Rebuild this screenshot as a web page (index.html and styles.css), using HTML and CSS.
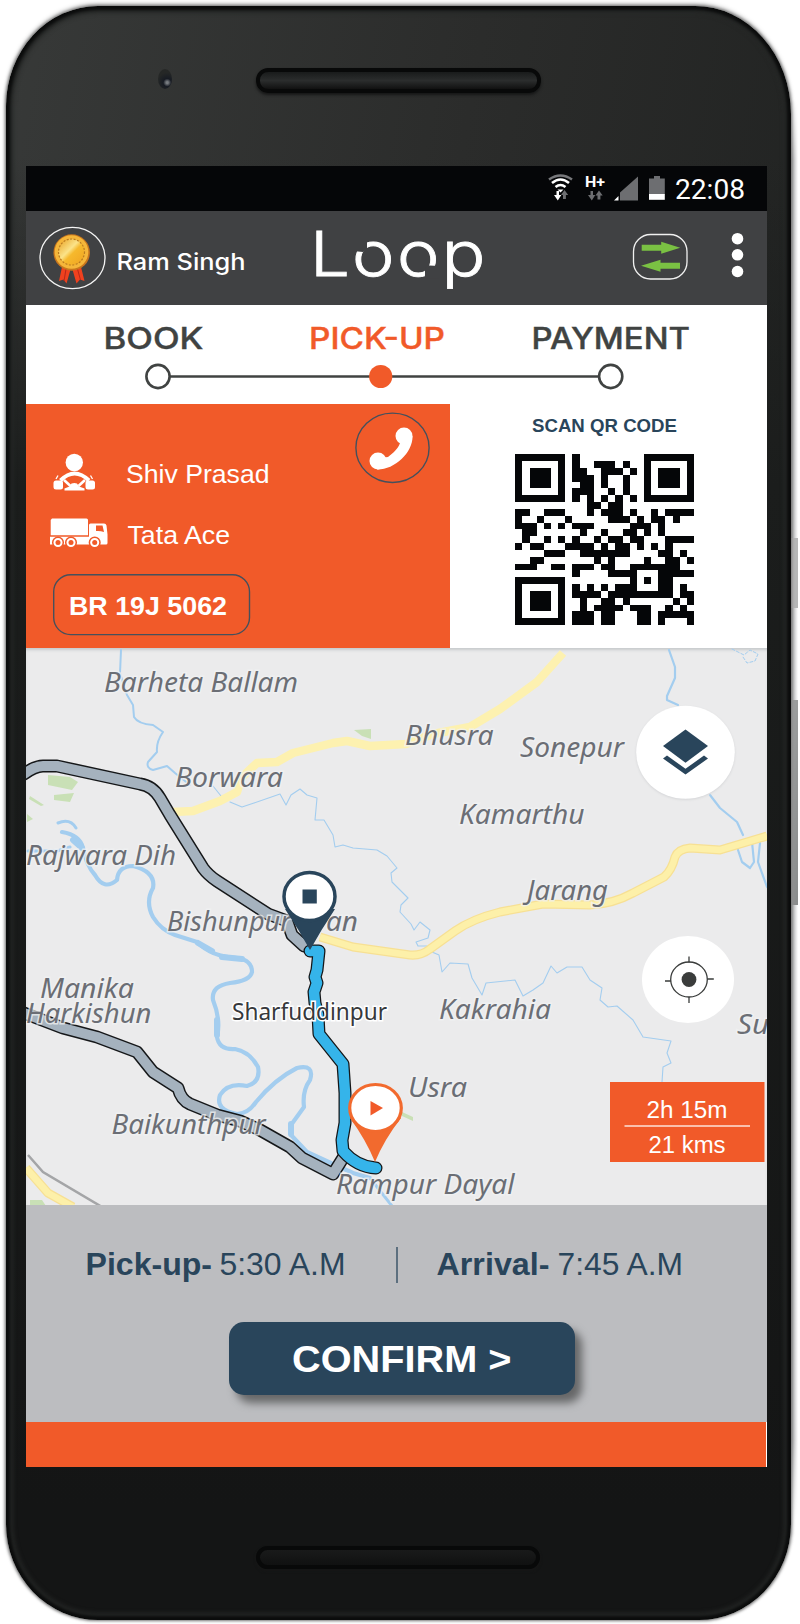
FILE: index.html
```html
<!DOCTYPE html>
<html lang="en">
<head>
<meta charset="utf-8">
<title>Loop</title>
<link rel="stylesheet" href="styles.css">
</head>
<body>
<div class="phone">
  <div class="bezel-top"><span class="camera"></span><span class="speaker"></span></div>
  <main class="screen">
    <div class="status">
      <svg viewBox="26 166 741 45">
        <g fill="none" stroke-width="2.6">
          <path d="M549 179.500Q560.500 171.500 572 179.500" stroke="#77787b"/>
          <path d="M552 183Q560.500 176 569 183M555.500 187Q560.500 183 565.500 187" stroke="#fff"/>
        </g>
        <path d="M557.500 189.500h6l-3 3z" fill="#fff"/>
        <path d="M556.500 191v4h-2.500l3.800 5.500 3.500-5.500h-2.300v-4z" fill="#fff"/>
        <path d="M563 199v-4h-2l3.500-5 3.700 5h-2.300v4zM590.500 191v4h-2.500l3.800 5.500 3.500-5.500h-2.300v-4zM597.500 199.500v-4h-2l3.500-5 3.700 5h-2.300v4z" fill="#6d6e71"/>
        <text class="hplus" x="585" y="187" textLength="20" lengthAdjust="spacingAndGlyphs">H+</text>
        <path d="M638 176.500V200.500H620V192.500z" fill="#6d6e71"/><path d="M614 200.500l4.500-4.500v4.500z" fill="#fff"/>
        <path d="M649 178.500h5v-2.500h6v2.500h4.800v16H649z" fill="#6d6e71"/><path d="M649 194h15.800v5.800H649z" fill="#fff"/>
        <text class="clock" x="675" y="198.500" textLength="70" lengthAdjust="spacingAndGlyphs">22:08</text>
      </svg>
    </div>

    <header class="bar">
      <svg viewBox="26 211 741 94">
        <defs>
          <linearGradient id="gold" x1="0" y1="0" x2="1" y2="1"><stop offset="0" stop-color="#e9a01f"/><stop offset=".42" stop-color="#fbe389"/><stop offset=".55" stop-color="#f6b92d"/><stop offset="1" stop-color="#f0a321"/></linearGradient>
        </defs>
        <ellipse cx="72.500" cy="258" rx="32.500" ry="30.700" fill="none" stroke="#f4f4f4" stroke-width="1.300"/>
        <path d="M62 267l-3 14 4.500-1.500 3 4 4-14v-2.500zM81 267l3.500 14-4.500-1.500-3.500 4-4-14v-2.500z" fill="#f0411e"/>
        <path d="M66 269l-2 12M77.500 269l3 11" stroke="#b7281a" stroke-width="1"/>
        <circle cx="71.700" cy="252.500" r="18.200" fill="#c9761d"/>
        <circle cx="71.500" cy="252" r="16.800" fill="#f5b63a"/>
        <circle cx="71.500" cy="252" r="13" fill="url(#gold)" stroke="#b97a20" stroke-width="1.200" stroke-dasharray="2 1.500"/>
        <text class="user" x="116.500" y="269.500" textLength="129" lengthAdjust="spacingAndGlyphs">Ram Singh</text>
        <g class="logo">
          <text x="310" y="276" textLength="40" lengthAdjust="spacingAndGlyphs">L</text>
          <text x="352" y="276" textLength="42.500" lengthAdjust="spacingAndGlyphs">o</text>
          <text x="397" y="276" textLength="42.500" lengthAdjust="spacingAndGlyphs">o</text>
          <text x="441.500" y="276" textLength="44" lengthAdjust="spacingAndGlyphs">p</text>
        </g>
        <path d="M353 251l10 1 4-3v-10h-14zM439 266l-10-.5-4 3v10h14z" fill="#404143"/>
        <rect x="633.500" y="234.500" width="53.500" height="44.500" rx="17" fill="none" stroke="#f0f0f0" stroke-width="1.300"/>
        <path d="M641.700 244.700h19.500v-3l19 6-19 6v-3h-19.500zM680 268.700h-19.500v3l-19.500-6 19.500-6v3H680z" fill="#7ac143"/>
        <g fill="#fff"><circle cx="737.500" cy="238.700" r="5.800"/><circle cx="737.500" cy="254.800" r="5.800"/><circle cx="737.500" cy="271.500" r="5.800"/></g>
      </svg>
    </header>

    <nav class="steps">
      <svg viewBox="26 305 741 99">
        <text x="103.500" y="349" textLength="100" lengthAdjust="spacingAndGlyphs">BOOK</text>
        <text class="on" x="309" y="349" textLength="136" lengthAdjust="spacingAndGlyphs">PICK-UP</text>
        <text x="531.500" y="349" textLength="158.500" lengthAdjust="spacingAndGlyphs">PAYMENT</text>
        <g fill="#fff" stroke="#404342" stroke-width="2.600">
          <path d="M158 376.500H611"/><circle cx="158" cy="376.500" r="11.600"/><circle cx="610.700" cy="376.500" r="11.600"/>
        </g>
        <circle cx="380.700" cy="376.500" r="11.600" fill="#f15a29"/>
      </svg>
    </nav>

    <section class="trip">
      <div class="driver">
        <svg viewBox="26 404 424 244">
          <ellipse cx="392.500" cy="447.800" rx="36.600" ry="34.700" fill="none" stroke="#45505c" stroke-width="1.400"/>
          <g fill="#fff">
            <circle cx="404" cy="436" r="8.500"/><circle cx="378" cy="461" r="8.500"/>
            <path d="M412.500 436C413 453 394 470 377 469.500L384 457.500 388 457C393 453 398 449 400 443z"/>
            <circle cx="74.300" cy="462.500" r="8.700"/>
            <rect x="53.500" y="480.500" width="9.500" height="9" rx="2.500"/><rect x="85.500" y="480.500" width="9.500" height="9" rx="2.500"/>
            <path d="M64.500 488.500l5-2 2-3q3-1 5.500 0l2 3 5.500 2v2h-20z"/>
          </g>
          <path d="M60.500 480.500Q74.500 466.500 89 480.500" fill="none" stroke="#fff" stroke-width="4"/>
          <path d="M64 480l6.500 6M85 480l-6.500 6" stroke="#fff" stroke-width="2.600"/>
          <path d="M56 479l2-3.500M92.500 479l-2-3.500" stroke="#fff" stroke-width="1.300"/>
          <g fill="#fff">
            <path d="M52 518.500h34.500q1.500 0 1.500 1.500v15.300H50.700V520z"/>
            <path d="M50 536.800h39V525q0-1.500 1.500-1.500H104q2 0 2.500 2l1 9v8.500q0 1.500-1.500 1.500H50z"/>
          </g>
          <path d="M96 525.500h6.500l1.500 6.500q-4-1.500-8-1z" fill="#f15a29"/>
          <g fill="#fff" stroke="#f15a29" stroke-width="1.500"><circle cx="58" cy="542.500" r="5.300"/><circle cx="71" cy="542.500" r="5.300"/><circle cx="94.700" cy="542.500" r="5.300"/></g>
          <g fill="#f15a29"><circle cx="58" cy="542.500" r="2.500"/><circle cx="71" cy="542.500" r="2.500"/><circle cx="94.700" cy="542.500" r="2.500"/></g>
          <text x="126" y="482.500" textLength="143.500" lengthAdjust="spacingAndGlyphs">Shiv Prasad</text>
          <text x="127.500" y="544" textLength="102.500" lengthAdjust="spacingAndGlyphs">Tata Ace</text>
          <rect x="53.700" y="574.800" width="195.800" height="59.800" rx="17" fill="none" stroke="#45505c" stroke-width="1.400"/>
          <text class="plate" x="69" y="614.700" textLength="158" lengthAdjust="spacingAndGlyphs">BR 19J 5062</text>
        </svg>
      </div>
      <div class="scan">
        <svg viewBox="450 404 317 244">
          <text x="532" y="431.500" textLength="145" lengthAdjust="spacingAndGlyphs">SCAN QR CODE</text>
          <path id="qr" transform="translate(515.300 454.300) scale(7.150 6.830)" fill="#050608" shape-rendering="crispEdges"/>
        </svg>
      </div>
    </section>

    <section class="map">
      <svg viewBox="26 648 741 557">
        <g fill="#c9e0b6">
          <path d="M48 775l22 2 8 5-6 8-24-5zM54 795l20-2-4 9-16-2zM30 796l14 9-3 1-12-7zM27 814l6 5-6 3zM354 730l17-1v10l-9-3zM30 1200l12 0 4 6H30zM402 1112l11 5v4l-11-5z"/>
        </g>
        <g fill="none" stroke="#a3cdef" stroke-linejoin="round" stroke-linecap="round">
          <path stroke-width="2" d="M121 650L120 673 127 695 133 705 134 717Q138 724 153 725L163 732Q156 742 157 752L148 762Q146 768 153 770L167 766 175 773 190 785"/>
          <path stroke-width="1.100" d="M213 786L221 796M230 802L242 807 254 803 280 794 286 805 291 795 300 789 307 795 317 798 315 820 324 820 333 835 335 847 343 845 353 848 377 850 387 856 397 868 391 873 392 882 408 898 401 905 400 912 411 924 414 930 420 922 430 930 428 938 416 942 418 946 427 946 432 952 439 955 442 972 450 963 468 964 472 978 482 995 486 983 515 980 523 996 533 990 543 983 551 966 557 973 567 967 582 967 590 980 602 988 600 1000 608 1007 617 1006 633 1020 643 1037 671 1041 667 1053 671 1063 663 1067 662 1082"/>
          <path stroke-width="4.200" d="M62 832Q80 835 83 848 86 865 95 875 104 891 117 880 118 866 133 866 156 872 153 888 145 902 153 917 161 930 175 935L197 942Q212 957 237 958 252 960 252 972 250 981 230 983 211 986 213 1000 221 1020 217 1037 219 1050 235 1049 250 1052 258 1067 261 1082 247 1086 228 1082 220 1095 215 1110 237 1114 248 1114 256 1102 275 1079 297 1068 315 1064 310 1080 302 1091 304 1107L291 1125V1135L307 1152 333 1164 353 1173 370 1178"/>
          <path stroke-width="6" d="M198 943l14 8M222 957l20 2M217 1020v15M73 840l9 8M291 1124v10"/>
          <path stroke-width="3" d="M58 823Q70 818 76 828M70 847l-13 4H28M370 1178L392 1206"/>
          <path stroke-width="2.200" d="M669 650L675 667V678L667 696V700L678 705M710 795L720 808 737 822 743 835M738 850L742 862 750 868 754 862 752 842M760 843L758 862 767 887"/>
          <path stroke-width="1" stroke-dasharray="3 2" d="M732 649l12 6 6-5 8 4-3 7-8 2-4-6"/>
        </g>
        <path d="M28 1155L43 1172 102 1207" fill="none" stroke="#a4a5a7" stroke-width="2.500"/>
        <path fill="none" stroke="#f7e094" stroke-width="9" stroke-linejoin="round" d="M320 937L353 947 410 955Q421 956 430 949L455 931Q472 919 500 912L543 904 590 905Q613 904 633 893L664 877Q672 870 675 857 678 849 690 848L720 850 767 836M26 1168L48 1193 73 1207"/>
        <g fill="none" stroke="#fdf0a9" stroke-linejoin="round">
          <path stroke-width="6.500" d="M320 937L353 947 410 955Q421 956 430 949L455 931Q472 919 500 912L543 904 590 905Q613 904 633 893L664 877Q672 870 675 857 678 849 690 848L720 850 767 836M26 1168L48 1193 73 1207"/>
          <path stroke-width="8.500" stroke="#fdf1b0" d="M173 812L193 811 220 801 237 792 241 778 257 763 277 762 293 753 333 743 347 741 370 746 406 744 433 734 470 727 500 709 537 682 563 653"/>
        </g>
        <g fill="none" stroke-linejoin="round" stroke-linecap="round">
          <path class="route-edge" d="M24 774Q35 766 43 766H57L140 784Q153 786 160 798L170 815 203 868Q208 875 217 881L268 914 287 921 292 935 304 946"/>
          <path class="route-edge" d="M24 1013L63 1028 97 1037 137 1052 153 1072 178 1088Q181 1100 190 1104L217 1115 240 1121 260 1130 290 1147 302 1158 333 1174 343 1158"/>
          <path class="route" d="M24 774Q35 766 43 766H57L140 784Q153 786 160 798L170 815 203 868Q208 875 217 881L268 914 287 921 292 935 304 946"/>
          <path class="route" d="M24 1013L63 1028 97 1037 137 1052 153 1072 178 1088Q181 1100 190 1104L217 1115 240 1121 260 1130 290 1147 302 1158 333 1174 343 1158"/>
          <path class="route-edge" d="M310 951L319 951 317 970 315 977 317 983 314 992 315 1003 318 1015 319 1034 343 1064 345 1093 345 1123 342 1140 343 1151Q357 1167 376 1168"/>
          <path class="active" d="M310 951L319 951 317 970 315 977 317 983 314 992 315 1003 318 1015 319 1034 343 1064 345 1093 345 1123 342 1140 343 1151Q357 1167 376 1168"/>
        </g>
        <g class="places">
          <text x="104" y="692" textLength="194" lengthAdjust="spacingAndGlyphs">Barheta Ballam</text>
          <text x="405" y="745" textLength="88.500" lengthAdjust="spacingAndGlyphs">Bhusra</text>
          <text x="520" y="756.500" textLength="104" lengthAdjust="spacingAndGlyphs">Sonepur</text>
          <text x="175" y="786.500" textLength="108" lengthAdjust="spacingAndGlyphs">Borwara</text>
          <text x="459" y="823.500" textLength="125.500" lengthAdjust="spacingAndGlyphs">Kamarthu</text>
          <text x="26" y="865" textLength="150" lengthAdjust="spacingAndGlyphs">Rajwara Dih</text>
          <text x="527" y="900" textLength="81" lengthAdjust="spacingAndGlyphs">Jarang</text>
          <text x="167" y="930.500" textLength="124" lengthAdjust="spacingAndGlyphs">Bishunpur</text>
          <text x="326" y="930.500" textLength="32" lengthAdjust="spacingAndGlyphs">an</text>
          <text x="40" y="997.500" textLength="94" lengthAdjust="spacingAndGlyphs">Manika</text>
          <text x="26" y="1022.500" textLength="125.500" lengthAdjust="spacingAndGlyphs">Harkishun</text>
          <text x="439" y="1018.500" textLength="112" lengthAdjust="spacingAndGlyphs">Kakrahia</text>
          <text x="408" y="1096.500" textLength="59" lengthAdjust="spacingAndGlyphs">Usra</text>
          <text x="111.500" y="1133.500" textLength="154" lengthAdjust="spacingAndGlyphs">Baikunthpur</text>
          <text x="336" y="1194" textLength="178.500" lengthAdjust="spacingAndGlyphs">Rampur Dayal</text>
          <text x="737" y="1033.500" textLength="32" lengthAdjust="spacingAndGlyphs">Su</text>
          <text class="town" x="232" y="1019.500" textLength="155" lengthAdjust="spacingAndGlyphs">Sharfuddinpur</text>
        </g>
        <path d="M285 909Q299 930 310 950 321 930 335 909z" fill="#29455b"/>
        <ellipse cx="309.500" cy="896.500" rx="25.500" ry="24" fill="#fff" stroke="#29455b" stroke-width="3.500"/>
        <path d="M302.500 889.500h14.300v14h-14.300z" fill="#29455b"/>
        <path d="M350 1118Q366 1140 375 1162 384 1140 401 1118z" fill="#f26a2e"/>
        <ellipse cx="375.500" cy="1108" rx="25.800" ry="23.500" fill="#fff" stroke="#f26a2e" stroke-width="3.200"/>
        <path d="M370.500 1101l12.500 7-12.500 7.500z" fill="#f15a29"/>
        <g fill="#fff">
          <ellipse class="lift" cx="685.500" cy="752.300" rx="49.300" ry="46.500"/>
          <ellipse cx="688" cy="979.500" rx="46" ry="43.500"/>
        </g>
        <g fill="#29455b"><path d="M685.500 729.500l22.500 16.500-22.500 16.700L663 746z"/><path d="M663 758.500l4-3 18.500 13.300 18.500-13.300 4 3-22.500 16z"/></g>
        <g fill="none" stroke="#3a3c3b" stroke-width="1.300"><ellipse cx="689" cy="979.500" rx="18.300" ry="17.500"/><path d="M689 956.500v6M689 997v6M665 981h6M707.300 979h6.500"/></g>
        <circle cx="689" cy="979.500" r="7.400" fill="#3a3c3b"/>
        <g class="eta">
          <path d="M610 1082h154.500v80H610z" fill="#f15a29"/>
          <path d="M624.500 1126h125.500" stroke="#fde3d9" stroke-width="1.400"/>
          <text x="646.500" y="1118" textLength="81" lengthAdjust="spacingAndGlyphs">2h 15m</text>
          <text x="648.500" y="1152.500" textLength="77" lengthAdjust="spacingAndGlyphs">21 kms</text>
        </g>
      </svg>
    </section>

    <section class="summary">
      <svg class="times" viewBox="26 1240 741 50">
        <text class="b" x="85.500" y="1274.500" textLength="126.500" lengthAdjust="spacingAndGlyphs">Pick-up-</text>
        <text x="219.500" y="1274.500" textLength="126" lengthAdjust="spacingAndGlyphs">5:30 A.M</text>
        <path d="M397 1247v36" stroke="#29455b" stroke-width="1.300"/>
        <text class="b" x="436.500" y="1274.500" textLength="113" lengthAdjust="spacingAndGlyphs">Arrival-</text>
        <text x="557.500" y="1274.500" textLength="125.500" lengthAdjust="spacingAndGlyphs">7:45 A.M</text>
      </svg>
      <button class="confirm">
        <svg viewBox="229 1322 346 73">
          <text x="292" y="1371.500" textLength="219.500" lengthAdjust="spacingAndGlyphs">CONFIRM &gt;</text>
        </svg>
      </button>
    </section>
    <footer class="strip"></footer>
  </main>
  <div class="bezel-bottom"><span class="speaker low"></span></div>
</div>
<script src="qr.js"></script>
</body>
</html>
```

FILE: styles.css
```css
* { box-sizing: border-box; }
body { margin: 0; width: 800px; height: 1624px; overflow: hidden; padding: 6px 0 0 6px; background: #fff;
  font-family: "Liberation Sans", Arial, sans-serif; }
/* side keys along the right edge */
body::before { content: ""; position: absolute; z-index: -1; left: 785px; top: 100px; width: 15px; height: 1420px;
  background: linear-gradient(#9a9c9c, #8a8c8c) 0 600px / 13px 205px no-repeat,
    linear-gradient(#b5b6b6, #b5b6b6) 0 438px / 13px 70px no-repeat,
    linear-gradient(90deg, #6d6f70 5px, #c9cacb 9px, #fff 13px);
  -webkit-mask: linear-gradient(transparent, #000 60px, #000 1340px, transparent);
  mask: linear-gradient(transparent, #000 60px, #000 1340px, transparent); }
svg { display: block; width: 100%; height: 100%; }

.phone { width: 785px; height: 1614px; padding: 0 20px; display: flex; flex-direction: column;
  border-radius: 92px 96px 92px 92px / 100px 108px 96px 96px;
  background: linear-gradient(transparent 150px, #1b1d1c 480px, #141515 1500px), linear-gradient(100deg, #373938 0, #2b2c2b 45%, #1d1f1e 100%);
  box-shadow: inset 0 0 3px 4px #0b0c0c, inset 0 0 4px 7px #262827, 0 0 3px 1px #777, 0 -2px 5px #bbb; }
.bezel-top { height: 160px; padding: 62px 0 0 132px; display: flex; gap: 84px; }
.camera { width: 14px; height: 20px; margin-top: 1px; border-radius: 50%;
  background: radial-gradient(circle at 66% 68%, #777b80 0 1px, #171b23 4px, #252726 10px); }
.speaker { width: 285px; height: 25px; border: 4px solid #080909; border-radius: 12px;
  background: linear-gradient(#191b1b, #2b2d2d 50%, #111); box-shadow: 0 2px 3px #161717; }
.bezel-bottom { height: 153px; padding: 79px 0 0 230px; }
.low { display: block; width: 284px; height: 23px; background: linear-gradient(#191a1a, #101111); }

.screen { width: 741px; height: 1301px; flex: none; background: #fff; }
.status { height: 45px; background: #050608; }
.hplus { font: 700 15px Roboto, sans-serif; fill: #fff; }
.clock { font: 400 27px Roboto, sans-serif; fill: #fff; }
.bar { height: 94px; background: #404143; }
.user { font: 500 22.500px Inter, sans-serif; fill: #fff; }
.logo { font: 300 62px Inter, sans-serif; fill: #fff; stroke: #fff; stroke-width: .8px; }
.steps { height: 99px; }
.steps text { font: 500 29.500px Inter, sans-serif; fill: #404342; stroke: #404342; stroke-width: .4px; }
.steps .on { fill: #f15a29; stroke: #f15a29; }

.trip { height: 244px; display: flex; }
.driver { width: 424px; background: #f15a29; }
.driver text { font-size: 25.500px; fill: #fff; }
.driver .plate { font-weight: 700; font-size: 26px; }
.scan { flex: 1; }
.scan text { font-weight: 700; font-size: 18px; fill: #29455b; }

.map { height: 557px; background: #ebebec; box-shadow: inset 0 3px 3px -1px #c6c9cb; }
.route-edge { stroke: #151719; stroke-width: 13px; }
.route { stroke: #a5b2be; stroke-width: 10px; }
.active { stroke: #35b4ea; stroke-width: 10.500px; }
.places text { font: italic 400 26.500px "Noto Sans", "Open Sans", sans-serif; fill: #6b6e75; stroke: #f1f2f3;
  stroke-width: 3px; stroke-opacity: .75; paint-order: stroke; }
.places .town { font-style: normal; font-size: 23px; fill: #36383b; stroke: #fff; stroke-opacity: 1; }
.lift { filter: drop-shadow(0 1px 1px #d4d5d7); }
.eta text { font-size: 23.500px; fill: #fff; }

.summary { height: 217px; padding-top: 35px; background: #bcbdc0; }
.times { height: 50px; font-size: 30.500px; fill: #29455b; }
.times .b { font-weight: 700; }
.confirm { display: block; width: 346px; height: 73px; margin: 32px 0 0 203px; padding: 0; border: 0; border-radius: 15px;
  background: #29455b; box-shadow: 7px 8px 9px #666768; }
.confirm text { font: 700 37px "Liberation Sans", Arial, sans-serif; fill: #fff; }
.strip { height: 45px; margin-right: 1px; background: #f15a29; }
```

FILE: qr.js
```js
// Dark modules per row, outside the three finder squares.
const rows = [
  [8], [8, 11, 12, 13, 15], [8, 9, 12, 13, 14, 16], [8, 9, 10, 12, 15], [9, 10, 12, 15],
  [8, 9, 10, 13, 15], [8, 10, 12, 14, 16], [10, 11, 13, 14],
  [0, 1, 4, 5, 6, 10, 12, 13, 14, 16, 19, 21, 22, 23, 24], [0, 3, 7, 13, 14, 15, 17, 19, 20, 22],
  [0, 1, 2, 4, 6, 8, 9, 10, 16, 17, 18, 20], [1, 2, 9, 12, 15, 16, 18, 20],
  [1, 4, 6, 8, 11, 13, 14, 16, 17, 21, 22, 23, 24], [0, 2, 3, 7, 8, 9, 10, 12, 14, 15, 17, 19, 21],
  [4, 5, 6, 9, 10, 11, 12, 13, 14, 15, 20, 21, 23], [2, 3, 11, 13, 18, 21, 22, 24],
  [0, 1, 2, 5, 6, 8, 9, 10, 12, 13, 16, 17, 18, 19, 20, 21, 22], [8, 13, 14, 15, 16, 20, 21, 22, 23, 24],
  [16, 18, 20, 21], [8, 10, 12, 14, 15, 16, 20, 21, 23],
  [8, 9, 10, 11, 13, 14, 15, 16, 17, 18, 19, 20, 21, 23, 24], [9, 12, 13, 15, 22, 24],
  [9, 11, 12, 13, 14, 16, 17, 18, 21, 23], [8, 9, 10, 12, 13, 17, 18, 20, 21, 22, 23, 24],
  [8, 9, 10, 12, 13, 17, 18, 20, 24]
];
const finder = (x, y) => `M${x} ${y}h7v7h-7zM${x + 1} ${y + 1}v5h5v-5zM${x + 2} ${y + 2}h3v3h-3z`;
let d = finder(0, 0) + finder(18, 0) + finder(0, 18);
rows.forEach((cols, y) => cols.forEach(x => { d += `M${x} ${y}h1v1h-1z`; }));
document.getElementById("qr").setAttribute("d", d);
```
